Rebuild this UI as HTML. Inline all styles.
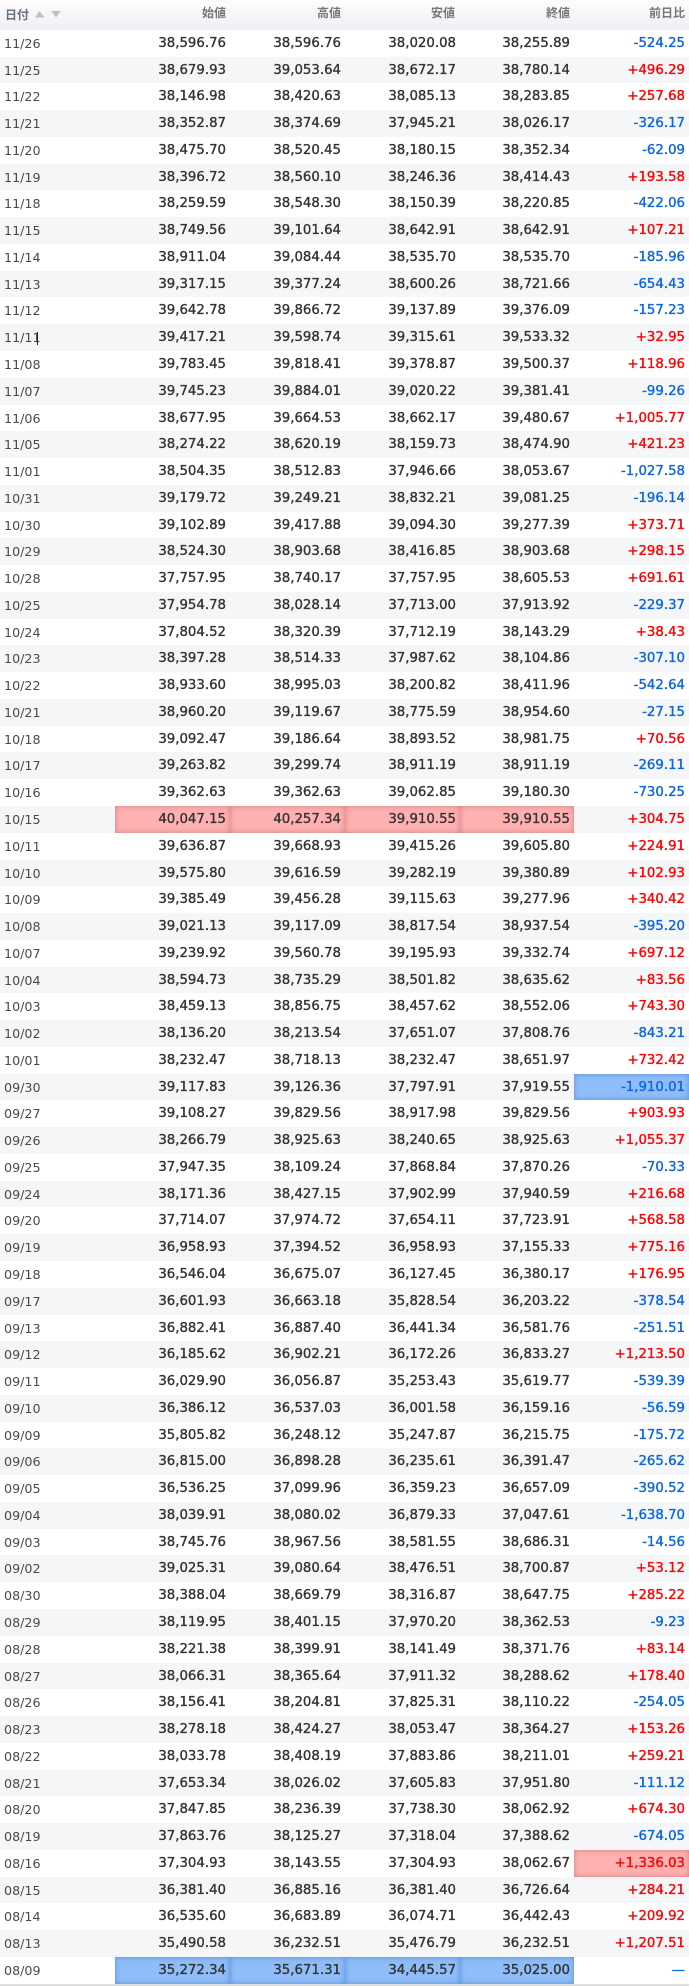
<!DOCTYPE html>
<html lang="ja"><head><meta charset="utf-8"><title>日経平均</title>
<style>
html,body{margin:0;padding:0;background:#fff}
body{width:689px;height:1988px;position:relative;overflow:hidden;font-family:"DejaVu Sans","Noto Sans CJK JP",sans-serif;font-size:13.3px;color:#333}
#hd{position:absolute;left:0;top:0;width:689px;height:30px;background:linear-gradient(#fdfdfe,#eff0f3);color:#777;font-weight:bold;font-size:12px;font-family:"Liberation Sans","Noto Sans CJK JP",sans-serif}
#hd span{position:absolute;top:4px;line-height:18px;text-align:right;width:60px}
#hd .d{left:5px;top:6px;text-align:left;color:#66707f}
#t{position:absolute;left:0;top:29.8px;width:689px;border-bottom:2px solid #dcdde2}
.r{height:26.78px;line-height:28.8px;display:grid;grid-template-rows:26.78px;grid-template-columns:115px 115px 115px 115px 114px 115px}
.r:nth-child(even){background:#f5f6f8}
.r>*{font-style:normal;font-weight:normal;text-decoration:none;text-align:right;padding-right:4px;-webkit-text-stroke:.35px currentColor;white-space:nowrap}
.r>i{text-align:left;padding-left:4px;color:#4a4a4a;-webkit-text-stroke:0;font-size:12.7px}
.r>.m{color:#0a66e0}.r>.p{color:#f00}
.r>.h{background:#ffb0b0;box-shadow:inset 0 0 6px #cf8086}
.r>.l{background:#8fbdf9;box-shadow:inset 0 0 6px #5a8fd6}
.c{position:absolute;left:37px;top:332px;width:1px;height:13px;background:#222}
</style></head><body>
<div id="hd"><span class="d">日付</span>
<svg style="position:absolute;left:34px;top:10px" width="30" height="9"><polygon points="1,7.5 5.5,1 10.5,7.5" fill="#bfc1c6"/><polygon points="17,1 27,1 22,7.5" fill="#bfc1c6"/></svg>
<span style="left:166px">始値</span><span style="left:281px">高値</span><span style="left:395px">安値</span><span style="left:510px">終値</span><span style="left:625px">前日比</span></div>
<div id="t">
<div class="r"><i>11/26</i><b>38,596.76</b><b>38,596.76</b><b>38,020.08</b><b>38,255.89</b><u class="m">-524.25</u></div>
<div class="r"><i>11/25</i><b>38,679.93</b><b>39,053.64</b><b>38,672.17</b><b>38,780.14</b><u class="p">+496.29</u></div>
<div class="r"><i>11/22</i><b>38,146.98</b><b>38,420.63</b><b>38,085.13</b><b>38,283.85</b><u class="p">+257.68</u></div>
<div class="r"><i>11/21</i><b>38,352.87</b><b>38,374.69</b><b>37,945.21</b><b>38,026.17</b><u class="m">-326.17</u></div>
<div class="r"><i>11/20</i><b>38,475.70</b><b>38,520.45</b><b>38,180.15</b><b>38,352.34</b><u class="m">-62.09</u></div>
<div class="r"><i>11/19</i><b>38,396.72</b><b>38,560.10</b><b>38,246.36</b><b>38,414.43</b><u class="p">+193.58</u></div>
<div class="r"><i>11/18</i><b>38,259.59</b><b>38,548.30</b><b>38,150.39</b><b>38,220.85</b><u class="m">-422.06</u></div>
<div class="r"><i>11/15</i><b>38,749.56</b><b>39,101.64</b><b>38,642.91</b><b>38,642.91</b><u class="p">+107.21</u></div>
<div class="r"><i>11/14</i><b>38,911.04</b><b>39,084.44</b><b>38,535.70</b><b>38,535.70</b><u class="m">-185.96</u></div>
<div class="r"><i>11/13</i><b>39,317.15</b><b>39,377.24</b><b>38,600.26</b><b>38,721.66</b><u class="m">-654.43</u></div>
<div class="r"><i>11/12</i><b>39,642.78</b><b>39,866.72</b><b>39,137.89</b><b>39,376.09</b><u class="m">-157.23</u></div>
<div class="r"><i>11/11</i><b>39,417.21</b><b>39,598.74</b><b>39,315.61</b><b>39,533.32</b><u class="p">+32.95</u></div>
<div class="r"><i>11/08</i><b>39,783.45</b><b>39,818.41</b><b>39,378.87</b><b>39,500.37</b><u class="p">+118.96</u></div>
<div class="r"><i>11/07</i><b>39,745.23</b><b>39,884.01</b><b>39,020.22</b><b>39,381.41</b><u class="m">-99.26</u></div>
<div class="r"><i>11/06</i><b>38,677.95</b><b>39,664.53</b><b>38,662.17</b><b>39,480.67</b><u class="p">+1,005.77</u></div>
<div class="r"><i>11/05</i><b>38,274.22</b><b>38,620.19</b><b>38,159.73</b><b>38,474.90</b><u class="p">+421.23</u></div>
<div class="r"><i>11/01</i><b>38,504.35</b><b>38,512.83</b><b>37,946.66</b><b>38,053.67</b><u class="m">-1,027.58</u></div>
<div class="r"><i>10/31</i><b>39,179.72</b><b>39,249.21</b><b>38,832.21</b><b>39,081.25</b><u class="m">-196.14</u></div>
<div class="r"><i>10/30</i><b>39,102.89</b><b>39,417.88</b><b>39,094.30</b><b>39,277.39</b><u class="p">+373.71</u></div>
<div class="r"><i>10/29</i><b>38,524.30</b><b>38,903.68</b><b>38,416.85</b><b>38,903.68</b><u class="p">+298.15</u></div>
<div class="r"><i>10/28</i><b>37,757.95</b><b>38,740.17</b><b>37,757.95</b><b>38,605.53</b><u class="p">+691.61</u></div>
<div class="r"><i>10/25</i><b>37,954.78</b><b>38,028.14</b><b>37,713.00</b><b>37,913.92</b><u class="m">-229.37</u></div>
<div class="r"><i>10/24</i><b>37,804.52</b><b>38,320.39</b><b>37,712.19</b><b>38,143.29</b><u class="p">+38.43</u></div>
<div class="r"><i>10/23</i><b>38,397.28</b><b>38,514.33</b><b>37,987.62</b><b>38,104.86</b><u class="m">-307.10</u></div>
<div class="r"><i>10/22</i><b>38,933.60</b><b>38,995.03</b><b>38,200.82</b><b>38,411.96</b><u class="m">-542.64</u></div>
<div class="r"><i>10/21</i><b>38,960.20</b><b>39,119.67</b><b>38,775.59</b><b>38,954.60</b><u class="m">-27.15</u></div>
<div class="r"><i>10/18</i><b>39,092.47</b><b>39,186.64</b><b>38,893.52</b><b>38,981.75</b><u class="p">+70.56</u></div>
<div class="r"><i>10/17</i><b>39,263.82</b><b>39,299.74</b><b>38,911.19</b><b>38,911.19</b><u class="m">-269.11</u></div>
<div class="r"><i>10/16</i><b>39,362.63</b><b>39,362.63</b><b>39,062.85</b><b>39,180.30</b><u class="m">-730.25</u></div>
<div class="r"><i>10/15</i><b class="h">40,047.15</b><b class="h">40,257.34</b><b class="h">39,910.55</b><b class="h">39,910.55</b><u class="p">+304.75</u></div>
<div class="r"><i>10/11</i><b>39,636.87</b><b>39,668.93</b><b>39,415.26</b><b>39,605.80</b><u class="p">+224.91</u></div>
<div class="r"><i>10/10</i><b>39,575.80</b><b>39,616.59</b><b>39,282.19</b><b>39,380.89</b><u class="p">+102.93</u></div>
<div class="r"><i>10/09</i><b>39,385.49</b><b>39,456.28</b><b>39,115.63</b><b>39,277.96</b><u class="p">+340.42</u></div>
<div class="r"><i>10/08</i><b>39,021.13</b><b>39,117.09</b><b>38,817.54</b><b>38,937.54</b><u class="m">-395.20</u></div>
<div class="r"><i>10/07</i><b>39,239.92</b><b>39,560.78</b><b>39,195.93</b><b>39,332.74</b><u class="p">+697.12</u></div>
<div class="r"><i>10/04</i><b>38,594.73</b><b>38,735.29</b><b>38,501.82</b><b>38,635.62</b><u class="p">+83.56</u></div>
<div class="r"><i>10/03</i><b>38,459.13</b><b>38,856.75</b><b>38,457.62</b><b>38,552.06</b><u class="p">+743.30</u></div>
<div class="r"><i>10/02</i><b>38,136.20</b><b>38,213.54</b><b>37,651.07</b><b>37,808.76</b><u class="m">-843.21</u></div>
<div class="r"><i>10/01</i><b>38,232.47</b><b>38,718.13</b><b>38,232.47</b><b>38,651.97</b><u class="p">+732.42</u></div>
<div class="r"><i>09/30</i><b>39,117.83</b><b>39,126.36</b><b>37,797.91</b><b>37,919.55</b><u class="m l">-1,910.01</u></div>
<div class="r"><i>09/27</i><b>39,108.27</b><b>39,829.56</b><b>38,917.98</b><b>39,829.56</b><u class="p">+903.93</u></div>
<div class="r"><i>09/26</i><b>38,266.79</b><b>38,925.63</b><b>38,240.65</b><b>38,925.63</b><u class="p">+1,055.37</u></div>
<div class="r"><i>09/25</i><b>37,947.35</b><b>38,109.24</b><b>37,868.84</b><b>37,870.26</b><u class="m">-70.33</u></div>
<div class="r"><i>09/24</i><b>38,171.36</b><b>38,427.15</b><b>37,902.99</b><b>37,940.59</b><u class="p">+216.68</u></div>
<div class="r"><i>09/20</i><b>37,714.07</b><b>37,974.72</b><b>37,654.11</b><b>37,723.91</b><u class="p">+568.58</u></div>
<div class="r"><i>09/19</i><b>36,958.93</b><b>37,394.52</b><b>36,958.93</b><b>37,155.33</b><u class="p">+775.16</u></div>
<div class="r"><i>09/18</i><b>36,546.04</b><b>36,675.07</b><b>36,127.45</b><b>36,380.17</b><u class="p">+176.95</u></div>
<div class="r"><i>09/17</i><b>36,601.93</b><b>36,663.18</b><b>35,828.54</b><b>36,203.22</b><u class="m">-378.54</u></div>
<div class="r"><i>09/13</i><b>36,882.41</b><b>36,887.40</b><b>36,441.34</b><b>36,581.76</b><u class="m">-251.51</u></div>
<div class="r"><i>09/12</i><b>36,185.62</b><b>36,902.21</b><b>36,172.26</b><b>36,833.27</b><u class="p">+1,213.50</u></div>
<div class="r"><i>09/11</i><b>36,029.90</b><b>36,056.87</b><b>35,253.43</b><b>35,619.77</b><u class="m">-539.39</u></div>
<div class="r"><i>09/10</i><b>36,386.12</b><b>36,537.03</b><b>36,001.58</b><b>36,159.16</b><u class="m">-56.59</u></div>
<div class="r"><i>09/09</i><b>35,805.82</b><b>36,248.12</b><b>35,247.87</b><b>36,215.75</b><u class="m">-175.72</u></div>
<div class="r"><i>09/06</i><b>36,815.00</b><b>36,898.28</b><b>36,235.61</b><b>36,391.47</b><u class="m">-265.62</u></div>
<div class="r"><i>09/05</i><b>36,536.25</b><b>37,099.96</b><b>36,359.23</b><b>36,657.09</b><u class="m">-390.52</u></div>
<div class="r"><i>09/04</i><b>38,039.91</b><b>38,080.02</b><b>36,879.33</b><b>37,047.61</b><u class="m">-1,638.70</u></div>
<div class="r"><i>09/03</i><b>38,745.76</b><b>38,967.56</b><b>38,581.55</b><b>38,686.31</b><u class="m">-14.56</u></div>
<div class="r"><i>09/02</i><b>39,025.31</b><b>39,080.64</b><b>38,476.51</b><b>38,700.87</b><u class="p">+53.12</u></div>
<div class="r"><i>08/30</i><b>38,388.04</b><b>38,669.79</b><b>38,316.87</b><b>38,647.75</b><u class="p">+285.22</u></div>
<div class="r"><i>08/29</i><b>38,119.95</b><b>38,401.15</b><b>37,970.20</b><b>38,362.53</b><u class="m">-9.23</u></div>
<div class="r"><i>08/28</i><b>38,221.38</b><b>38,399.91</b><b>38,141.49</b><b>38,371.76</b><u class="p">+83.14</u></div>
<div class="r"><i>08/27</i><b>38,066.31</b><b>38,365.64</b><b>37,911.32</b><b>38,288.62</b><u class="p">+178.40</u></div>
<div class="r"><i>08/26</i><b>38,156.41</b><b>38,204.81</b><b>37,825.31</b><b>38,110.22</b><u class="m">-254.05</u></div>
<div class="r"><i>08/23</i><b>38,278.18</b><b>38,424.27</b><b>38,053.47</b><b>38,364.27</b><u class="p">+153.26</u></div>
<div class="r"><i>08/22</i><b>38,033.78</b><b>38,408.19</b><b>37,883.86</b><b>38,211.01</b><u class="p">+259.21</u></div>
<div class="r"><i>08/21</i><b>37,653.34</b><b>38,026.02</b><b>37,605.83</b><b>37,951.80</b><u class="m">-111.12</u></div>
<div class="r"><i>08/20</i><b>37,847.85</b><b>38,236.39</b><b>37,738.30</b><b>38,062.92</b><u class="p">+674.30</u></div>
<div class="r"><i>08/19</i><b>37,863.76</b><b>38,125.27</b><b>37,318.04</b><b>37,388.62</b><u class="m">-674.05</u></div>
<div class="r"><i>08/16</i><b>37,304.93</b><b>38,143.55</b><b>37,304.93</b><b>38,062.67</b><u class="p h">+1,336.03</u></div>
<div class="r"><i>08/15</i><b>36,381.40</b><b>36,885.16</b><b>36,381.40</b><b>36,726.64</b><u class="p">+284.21</u></div>
<div class="r"><i>08/14</i><b>36,535.60</b><b>36,683.89</b><b>36,074.71</b><b>36,442.43</b><u class="p">+209.92</u></div>
<div class="r"><i>08/13</i><b>35,490.58</b><b>36,232.51</b><b>35,476.79</b><b>36,232.51</b><u class="p">+1,207.51</u></div>
<div class="r"><i>08/09</i><b class="l">35,272.34</b><b class="l">35,671.31</b><b class="l">34,445.57</b><b class="l">35,025.00</b><u class="m">—</u></div>
</div>
<div class="c"></div>
</body></html>
